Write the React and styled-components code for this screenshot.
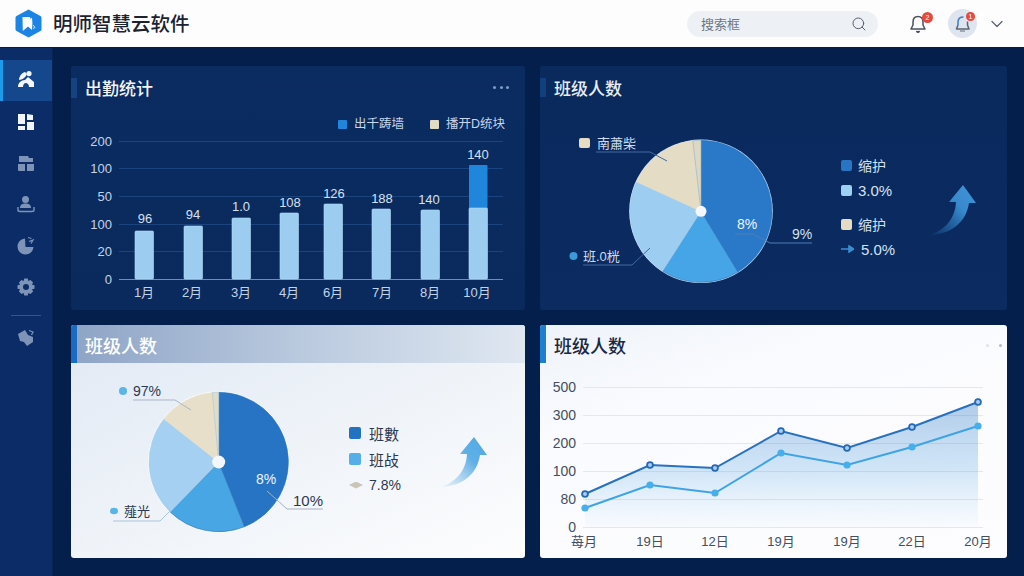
import React from 'react'
import styled, {createGlobalStyle} from 'styled-components'
import {Search, ChevronDown} from 'lucide-react'

const FONT = `'Liberation Sans', 'Noto Sans CJK SC', sans-serif`

const GlobalStyle = createGlobalStyle`
  html, body {
    margin: 0;
    padding: 0;
    background: #06204f;
    overflow: hidden;
  }
  * {
    box-sizing: border-box;
  }
  body {
    font-family: ${FONT};
  }
`

const Page = styled.div`
  width: 1024px;
  height: 576px;
  display: flex;
  flex-direction: column;
  background: #051f4d;
`

const Header = styled.header`
  height: 48px;
  flex: none;
  display: flex;
  align-items: center;
  padding: 0 17px 0 15px;
  background: #fdfdfe;
  border-bottom: 1px solid #0a1c3c;
`

const Brand = styled.div`
  display: flex;
  align-items: center;
  gap: 11px;
  flex: 1;
`

const BrandName = styled.div`
  font-size: 19.5px;
  font-weight: 500;
  color: #1b2230;
  line-height: 24px;
`

const SearchBox = styled.div`
  width: 191px;
  height: 26px;
  border-radius: 13px;
  background: #edf1f6;
  display: flex;
  align-items: center;
  justify-content: space-between;
  padding: 0 11px 0 14px;
  font-size: 13px;
  color: #6f7782;
  margin-right: 30px;
`

const IconWrap = styled.div`
  position: relative;
  display: flex;
  align-items: center;
  justify-content: center;
`

const Badge = styled.span`
  position: absolute;
  top: ${props => props.$top}px;
  right: ${props => props.$right}px;
  width: ${props => props.$size}px;
  height: ${props => props.$size}px;
  border-radius: 50%;
  background: #e8473b;
  color: #fff;
  font-size: 7px;
  line-height: ${props => props.$size}px;
  text-align: center;
`

const Avatar = styled(IconWrap)`
  width: 29px;
  height: 29px;
  border-radius: 50%;
  background: #dfe5ee;
  margin-left: 20px;
  margin-right: 10px;
`

const Body = styled.div`
  flex: 1;
  display: flex;
  min-height: 0;
`

const Sidebar = styled.nav`
  width: 53px;
  flex: none;
  background: #0b2c66;
  border-right: 1px solid #082354;
  padding-top: 12px;
  display: flex;
  flex-direction: column;
`

const NavItem = styled.div`
  height: ${props => props.$h || 41}px;
  display: flex;
  align-items: center;
  justify-content: center;
  opacity: ${props => props.$dim ? 0.62 : 1};
  background: ${props => props.$active ? '#14478c' : 'transparent'};
  border-left: 3px solid ${props => props.$active ? '#1d9bea' : 'transparent'};
  padding-right: 3px;
  padding-bottom: ${props => props.$active ? 4 : 0}px;
`

const NavLine = styled.div`
  height: 1px;
  margin: 7px 11px 1px;
  background: #33558c;
`

const Main = styled.main`
  flex: 1;
  display: grid;
  grid-template-columns: 454px 467px;
  grid-template-rows: 244px 233px;
  gap: 15px;
  padding: 18px 17px 18px 18px;
`

const Panel = styled.section`
  position: relative;
  border-radius: 3px;
  overflow: hidden;
  display: flex;
  flex-direction: column;
  background: ${props => props.$bg};
`

const PanelHead = styled.div`
  height: 38px;
  flex: none;
  display: flex;
  align-items: center;
  justify-content: space-between;
  padding: ${props => props.$pt}px 16px 0 14px;
  position: relative;
  background: ${props => props.$bg || 'transparent'};
`

const Accent = styled.span`
  position: absolute;
  left: 0;
  top: ${props => props.$top}px;
  bottom: ${props => props.$bottom}px;
  width: 6px;
  background: ${props => props.$color};
`

const Title = styled.h2`
  margin: 0;
  font-size: ${props => props.$size}px;
  font-weight: 500;
  color: ${props => props.$color};
`

const Dots = styled.div`
  display: flex;
  gap: 3.5px;
`

const Dot = styled.i`
  width: ${props => props.$size}px;
  height: ${props => props.$size}px;
  border-radius: 50%;
  background: ${props => props.$color};
`

const ChartSvg = styled.svg`
  display: block;
  flex: none;
`

const ChartLabel = styled.text`
  font-family: ${FONT};
  font-size: ${props => props.$size || 13}px;
  fill: ${props => props.$color};
  dominant-baseline: central;
`

const PieBody = styled.div`
  flex: 1;
  display: flex;
  min-height: 0;
  position: relative;
`

const Legend = styled.div`
  display: flex;
  flex-direction: column;
  flex: none;
  margin-top: ${props => props.$mt}px;
`

const LegendRow = styled.div`
  display: flex;
  align-items: center;
  gap: ${props => props.$gap || 6}px;
  height: 20px;
  margin-top: ${props => props.$mt || 0}px;
  font-size: ${props => props.$size || 14}px;
  color: ${props => props.$color};
`

const Swatch = styled.span`
  width: ${props => props.$w || 11}px;
  height: ${props => props.$w || 11}px;
  border-radius: 2px;
  flex: none;
  background: ${props => props.$color};
`

const Diamond = styled.span`
  width: 14px;
  height: 7px;
  flex: none;
  background: #c9c6b8;
  clip-path: polygon(0 50%, 50% 0, 100% 50%, 50% 100%);
`

const ArrowSlot = styled.div`
  flex: none;
  margin-left: ${props => props.$ml}px;
  margin-top: ${props => props.$mt}px;
`

const SideIcon = ({children}) => (
  <svg width="20" height="20" viewBox="0 0 20 20">{children}</svg>
)

const Logo = () => (
  <svg width="27" height="29" viewBox="0 0 27 29">
    <path d="M13.5 0.5 L25.5 7 Q26.5 7.6 26.5 8.8 V20.2 Q26.5 21.4 25.5 22 L13.5 28.5 L1.5 22 Q0.5 21.4 0.5 20.2 V8.8 Q0.5 7.6 1.5 7 Z" fill="#1c84e4" />
    <path d="M7.5 8 H15 L15.6 10 L17 8.6 L17.4 14 L17 21 L13 17.6 L7.8 22 Z" fill="#fff" />
    <path d="M18 16 l2 2.4 -2 1.2" fill="none" stroke="#cfe6fb" strokeWidth="1" />
  </svg>
)

const BellOutline = ({size, color}) => (
  <svg width={size} height={size} viewBox="0 0 20 20" fill="none" stroke={color} strokeWidth="1.5" strokeLinejoin="round">
    <path d="M10 2.5 C6.5 2.5 5 5 5 8 V11 L3 15 H17 L15 11 V8 C15 5 13.5 2.5 10 2.5 Z" />
    <path d="M8.4 17 Q10 19.4 11.6 17" fill={color} />
  </svg>
)

const ChatBell = () => (
  <svg width="20" height="20" viewBox="0 0 20 20" fill="none" strokeWidth="1.5" strokeLinejoin="round">
    <path d="M5 11 V8 C5 5 7 3 10.5 3" stroke="#3a7fc9" />
    <path d="M5 11 L3.5 15 H16 L14.5 11 V7.5" stroke="#5b6573" />
    <path d="M7 17 H12" stroke="#8c96a3" />
  </svg>
)

// pie slice from two clockwise angles, 0 at twelve o'clock
const slice = (cx, cy, r, from, to) => {
  const point = a => {
    const rad = (a * Math.PI) / 180
    return `${(cx + r * Math.sin(rad)).toFixed(2)} ${(cy - r * Math.cos(rad)).toFixed(2)}`
  }
  const large = to - from > 180 ? 1 : 0
  return `M${cx} ${cy} L${point(from)} A${r} ${r} 0 ${large} 1 ${point(to)} Z`
}

const Pie = ({cx, cy, r, slices, stroke, hole}) => (
  <g>
    <circle cx={cx} cy={cy} r={r + 0.8} fill={stroke} />
    {slices.map(s => (
      <path key={s.from} d={slice(cx, cy, r, s.from, s.to)} fill={s.color} stroke={s.line} strokeWidth="0.6" />
    ))}
    <circle cx={cx} cy={cy} r={hole} fill="#f4f7fb" />
  </g>
)

const TrendArrow = ({id, from, to}) => (
  <svg width="50" height="52" viewBox="0 0 50 52">
    <defs>
      <linearGradient id={id} x1="0" y1="1" x2="1" y2="0">
        <stop offset="0" stopColor={from} stopOpacity="0.1" />
        <stop offset="0.6" stopColor={to} stopOpacity="0.9" />
        <stop offset="1" stopColor={to} />
      </linearGradient>
    </defs>
    <path d="M2 51 C16 46 27 36 28 18 L21 18 L35 1 L48 19 L41 19 C38 38 24 50 2 51 Z" fill={`url(#${id})`} />
  </svg>
)

const BARS = [
  {x: 65, top: 131, label: '96', lx: 75, ly: 118, month: '1月', mx: 74},
  {x: 114, top: 126, label: '94', lx: 123, ly: 114, month: '2月', mx: 122},
  {x: 162, top: 118, label: '1.0', lx: 171, ly: 106, month: '3月', mx: 171},
  {x: 210, top: 113, label: '108', lx: 220, ly: 102, month: '4月', mx: 219},
  {x: 254, top: 104, label: '126', lx: 264, ly: 93, month: '6月', mx: 263},
  {x: 302, top: 109, label: '188', lx: 312, ly: 98, month: '7月', mx: 312},
  {x: 351, top: 110, label: '140', lx: 359, ly: 99, month: '8月', mx: 360},
  {x: 399, top: 108, label: '140', lx: 408, ly: 54, month: '10月', mx: 407, extra: 65},
]

const BAR_AXIS = [
  {label: '200', y: 41},
  {label: '100', y: 68},
  {label: '50', y: 96},
  {label: '100', y: 124},
  {label: '20', y: 151},
  {label: '0', y: 179},
]

const BarPanel = () => (
  <Panel $bg="linear-gradient(180deg, #0b2c61 0%, #0a2a5d 100%)">
    <PanelHead $pt={4}>
      <Accent $top={12} $bottom={6} $color="#16427f" />
      <Title $size={17} $color="#f2f5fa">出勤统计</Title>
      <Dots>
        <Dot $size={3} $color="#7d9bc6" />
        <Dot $size={3} $color="#7d9bc6" />
        <Dot $size={3} $color="#7d9bc6" />
      </Dots>
    </PanelHead>
    <ChartSvg width="454" height="206" viewBox="1 4 454 206">
      <rect x="268" y="20" width="9" height="9" rx="1" fill="#1f86dc" />
      <ChartLabel x="284" y="24" $size={12.5} $color="#c7d7ec">出千踌墙</ChartLabel>
      <rect x="360" y="20" width="9" height="9" rx="1" fill="#e3dcc4" />
      <ChartLabel x="376" y="24" $size={12.5} $color="#c7d7ec">播开D统块</ChartLabel>
      {BAR_AXIS.map(t => (
        <g key={t.y}>
          <line x1="49" x2="433" y1={t.y + 0.5} y2={t.y + 0.5} stroke={t.y === 179 ? '#6f8db8' : '#1b447f'} />
          <ChartLabel x="42" y={t.y} textAnchor="end" $color="#c3d3e8">{t.label}</ChartLabel>
        </g>
      ))}
      {BARS.map(b => (
        <g key={b.month}>
          {b.extra && <rect x={b.x} y={b.extra} width="18.5" height={b.top - b.extra + 1} rx="1" fill="#1f86dc" />}
          <rect x={b.x} y={b.top} width="18.5" height={179 - b.top} rx="1" fill="#9ccdf0" stroke="#b4dcf6" strokeWidth="0.6" />
          <ChartLabel x={b.lx} y={b.ly} textAnchor="middle" $color="#d4e0f0">{b.label}</ChartLabel>
          <ChartLabel x={b.mx} y={192} textAnchor="middle" $color="#c3d3e8">{b.month}</ChartLabel>
        </g>
      ))}
    </ChartSvg>
  </Panel>
)

const DARK_PIE = [
  {from: 0, to: 148.7, color: '#2a78c8', line: '#2a78c8'},
  {from: 148.7, to: 212.7, color: '#45a5e6', line: '#2e6fb4'},
  {from: 212.7, to: 294.6, color: '#9dcdf1', line: '#9dcdf1'},
  {from: 294.6, to: 353.4, color: '#e5dcc6', line: '#e5dcc6'},
  {from: 353.4, to: 360, color: '#dcd8c4', line: '#8fb4c6'},
]

const DarkPiePanel = () => (
  <Panel $bg="linear-gradient(180deg, #0a2a5e 0%, #0b2b61 100%)">
    <PanelHead $pt={4}>
      <Accent $top={12} $bottom={7} $color="#123f7e" />
      <Title $size={17} $color="#e8eef7">班级人数</Title>
    </PanelHead>
    <PieBody>
      <ChartSvg width="301" height="206" viewBox="0 38 301 206">
        <Pie cx={161} cy={145.3} r={71} slices={DARK_PIE} stroke="#cfe3f6" hole={5.5} />
        <rect x="39" y="72" width="11" height="10" rx="2" fill="#e6dcc4" />
        <ChartLabel x="57" y="77" $color="#cfdcec">南蕭柴</ChartLabel>
        <polyline points="56,86 110,86 127,95" fill="none" stroke="#3f6a9f" />
        <circle cx="33.5" cy="190" r="4" fill="#3d9ad8" />
        <ChartLabel x="43" y="190" $color="#cfdcec">班.0桄</ChartLabel>
        <polyline points="43,199 92,199 110,182" fill="none" stroke="#3f6a9f" />
        <ChartLabel x="207" y="158" textAnchor="middle" $size={14} $color="#eef4fb">8%</ChartLabel>
        <ChartLabel x="262" y="168" textAnchor="middle" $size={14} $color="#d5e1f0">9%</ChartLabel>
        <polyline points="195,168 213,168 230,177 272,177" fill="none" stroke="#4f7fb6" />
      </ChartSvg>
      <Legend $mt={51}>
        <LegendRow $color="#d5e1f0"><Swatch $color="#2a74c4" />缩护</LegendRow>
        <LegendRow $color="#d5e1f0" $size={15} $mt={5}><Swatch $color="#9dd0f3" />3.0%</LegendRow>
        <LegendRow $color="#d5e1f0" $mt={14}><Swatch $color="#e6dcc4" />缩护</LegendRow>
        <LegendRow $color="#d5e1f0" $size={15} $mt={5} $gap={7}>
          <svg width="13" height="8" viewBox="0 0 13 8">
            <path d="M0 4 H10 M8 1 L12.5 4 L8 7 Z" stroke="#3d8dd0" strokeWidth="1.6" fill="#3d8dd0" />
          </svg>
          5.0%
        </LegendRow>
      </Legend>
      <ArrowSlot $ml={33} $mt={80}>
        <TrendArrow id="darkArrow" from="#2a78c0" to="#3d94d8" />
      </ArrowSlot>
    </PieBody>
  </Panel>
)

const LIGHT_PIE = [
  {from: 0, to: 158.3, color: '#2874c4', line: '#2874c4'},
  {from: 158.3, to: 224.2, color: '#48a6e5', line: '#2a6db0'},
  {from: 224.2, to: 308.2, color: '#a5d0f1', line: '#a5d0f1'},
  {from: 308.2, to: 354.7, color: '#e8dfca', line: '#e8dfca'},
  {from: 354.7, to: 360, color: '#e0dcc8', line: '#a9c2cc'},
]

const LightPiePanel = () => (
  <Panel $bg="linear-gradient(155deg, #e1e9f4 0%, #f0f4f9 55%, #fdfdfe 100%)">
    <PanelHead $pt={2} $bg="linear-gradient(90deg, #8ea4c6 0%, #b9c9de 50%, #dfe7f1 100%)">
      <Accent $top={0} $bottom={0} $color="#1a6cc2" />
      <Title $size={18} $color="#ffffff">班级人数</Title>
    </PanelHead>
    <PieBody>
      <ChartSvg width="278" height="195" viewBox="0 38 278 195">
        <Pie cx={147.7} cy={137} r={69.7} slices={LIGHT_PIE} stroke="#ffffff" hole={6.5} />
        <circle cx="52" cy="66" r="4" fill="#57b5ea" />
        <ChartLabel x="62" y="66" $size={14} $color="#2c3850">97%</ChartLabel>
        <polyline points="62,75 104,75 120,85" fill="none" stroke="#a9b6c8" />
        <ellipse cx="43" cy="186" rx="4" ry="3.2" fill="#57b5ea" />
        <ChartLabel x="53" y="186" $color="#2c3850">薤光</ChartLabel>
        <polyline points="42,196 89,196 100,185" fill="none" stroke="#a9c4dc" />
        <ChartLabel x="195" y="154" textAnchor="middle" $size={14} $color="#eef5fc">8%</ChartLabel>
        <polyline points="196,166 216,184 252,184" fill="none" stroke="#a4b0c2" />
        <ChartLabel x="237" y="175" textAnchor="middle" $size={15} $color="#2c3850">10%</ChartLabel>
      </ChartSvg>
      <Legend $mt={60}>
        <LegendRow $color="#2c3850" $size={15} $gap={8}><Swatch $w={12} $color="#2372c2" />班數</LegendRow>
        <LegendRow $color="#2c3850" $size={15} $mt={6} $gap={8}><Swatch $w={12} $color="#55aee8" />班敁</LegendRow>
        <LegendRow $color="#2c3850" $mt={6} $gap={6}><Diamond />7.8%</LegendRow>
      </Legend>
      <ArrowSlot $ml={38} $mt={73}>
        <TrendArrow id="lightArrow" from="#8cc0e8" to="#4fa8e4" />
      </ArrowSlot>
    </PieBody>
  </Panel>
)

const LINE_X = [45, 110, 175, 241, 307, 372, 438]
const LINE_DARK = [169, 140, 143, 106, 123, 102, 77]
const LINE_LIGHT = [183, 160, 168, 128, 140, 122, 101]
const LINE_MONTHS = ['苺月', '19日', '12日', '19月', '19月', '22日', '20月']
const LINE_AXIS = [
  {label: '500', y: 62},
  {label: '300', y: 90},
  {label: '200', y: 118},
  {label: '100', y: 146},
  {label: '80', y: 174},
  {label: '0', y: 202},
]

const toPoints = values => values.map((y, i) => `${LINE_X[i]},${y}`).join(' ')

const LinePanel = () => (
  <Panel $bg="linear-gradient(160deg, #eef3fa 0%, #fafbfe 30%, #fdfdff 100%)">
    <PanelHead $pt={2}>
      <Accent $top={0} $bottom={0} $color="#1f7ed0" />
      <Title $size={18} $color="#1c2840">班级人数</Title>
      <Dots style={{gap: 10, marginRight: -11}}>
        <Dot $size={3} $color="#dfe3ea" />
        <Dot $size={3} $color="#b5bcc8" />
      </Dots>
    </PanelHead>
    <ChartSvg width="467" height="195" viewBox="0 38 467 195">
      <defs>
        <linearGradient id="lineFill" x1="0" y1="0" x2="0" y2="1">
          <stop offset="0" stopColor="#2a74c4" stopOpacity="0.36" />
          <stop offset="0.55" stopColor="#4b9ee0" stopOpacity="0.24" />
          <stop offset="1" stopColor="#7cc0f0" stopOpacity="0.03" />
        </linearGradient>
      </defs>
      {LINE_AXIS.map(t => (
        <g key={t.y}>
          <line x1="43" x2="443" y1={t.y + 0.5} y2={t.y + 0.5} stroke="#e3e7ee" />
          <ChartLabel x="36" y={t.y} textAnchor="end" $size={14} $color="#444e60">{t.label}</ChartLabel>
        </g>
      ))}
      <polygon points={`45,202 ${toPoints(LINE_DARK)} 438,202`} fill="url(#lineFill)" />
      <polyline points={toPoints(LINE_DARK)} fill="none" stroke="#2870c0" strokeWidth="2" />
      <polyline points={toPoints(LINE_LIGHT)} fill="none" stroke="#3ea4e6" strokeWidth="2" />
      {LINE_X.map((x, i) => (
        <g key={x}>
          <circle cx={x} cy={LINE_DARK[i]} r="2.9" fill="#a9cdf0" stroke="#2468b8" strokeWidth="1.8" />
          <circle cx={x} cy={LINE_LIGHT[i]} r="3.6" fill="#47aeec" />
          <ChartLabel x={x + (i === 0 ? -1 : 0)} y={216} textAnchor="middle" $color="#444e60">{LINE_MONTHS[i]}</ChartLabel>
        </g>
      ))}
    </ChartSvg>
  </Panel>
)

const App = () => (
  <Page>
    <GlobalStyle />
    <Header>
      <Brand>
        <Logo />
        <BrandName>明师智慧云软件</BrandName>
      </Brand>
      <SearchBox>
        <span>搜索框</span>
        <Search size={16} strokeWidth={1.5} color="#555e6b" />
      </SearchBox>
      <IconWrap>
        <BellOutline size={20} color="#4a525e" />
        <Badge $top={-2} $right={-5} $size={11}>2</Badge>
      </IconWrap>
      <Avatar>
        <ChatBell />
        <Badge $top={3} $right={2} $size={9}>1</Badge>
      </Avatar>
      <ChevronDown size={20} strokeWidth={1.5} color="#5a6370" />
    </Header>
    <Body>
      <Sidebar>
        <NavItem $active>
          <SideIcon>
            <path d="M9 3 C5 4 3 8 3 11 C6 11 10 8 11 5 Z M13 2 a2.6 2.6 0 1 1 0 5.2 a2.6 2.6 0 0 1 0 -5.2 Z M2 18 C2 14 5 11 9 11 L12 8 L18 13 V18 H13 C13 15 11 14 10 14 C8 14 7 16 7 18 Z" fill="#f4f7fc" />
          </SideIcon>
        </NavItem>
        <NavItem>
          <SideIcon>
            <path d="M2 2 H9 V12 H2 Z M11 2 L17 3 V8 H11 Z M11 10 H18 V18 H11 Z M2 14 H9 V18 H2 Z" fill="#f0f4fb" />
          </SideIcon>
        </NavItem>
        <NavItem $dim>
          <SideIcon>
            <path d="M3 3 H12 L13 5 H17 V9 H3 Z M2 11 H9 V18 H3 Q2 18 2 17 Z M11 11 H18 V17 Q18 18 17 18 H11 Z" fill="#c3d3ea" />
          </SideIcon>
        </NavItem>
        <NavItem $dim>
          <SideIcon>
            <circle cx="9.5" cy="5.5" r="3.5" fill="#c3d3ea" />
            <path d="M4 14 C4 10.5 6.5 9.5 9.5 9.5 C12.5 9.5 15 10.5 15 14 Z" fill="#c3d3ea" />
            <path d="M2 13 V16 Q2 17.5 4 17.5 H16 Q18 17.5 18 16 V13" fill="none" stroke="#c3d3ea" strokeWidth="1.4" />
          </SideIcon>
        </NavItem>
        <NavItem $dim>
          <SideIcon>
            <path d="M9 3.5 A8 8 0 1 0 17.5 12 H9.5 Z" fill="#c3d3ea" />
            <path d="M12 2.5 L15.5 3.5 M13 6.5 L17 5 L15 8.5" fill="none" stroke="#c3d3ea" strokeWidth="1.3" />
          </SideIcon>
        </NavItem>
        <NavItem $dim $h={43}>
          <SideIcon>
            <path fillRule="evenodd" d="M8.2 1.5 H11.8 L12.3 4 L14.5 2.9 L17.1 5.5 L16 7.7 L18.5 8.2 V11.8 L16 12.3 L17.1 14.5 L14.5 17.1 L12.3 16 L11.8 18.5 H8.2 L7.7 16 L5.5 17.1 L2.9 14.5 L4 12.3 L1.5 11.8 V8.2 L4 7.7 L2.9 5.5 L5.5 2.9 L7.7 4 Z M10 7 a3 3 0 1 0 0 6 a3 3 0 0 0 0 -6 Z" fill="#c3d3ea" />
          </SideIcon>
        </NavItem>
        <NavLine />
        <NavItem $dim>
          <SideIcon>
            <path d="M2 6 L9 2 L12 7 L17 9 V14 L11 18 L8 14 L4 13 Z" fill="#c3d3ea" />
            <path d="M13 2.5 L17 4 L15.5 7" fill="none" stroke="#c3d3ea" strokeWidth="1.3" />
          </SideIcon>
        </NavItem>
      </Sidebar>
      <Main>
        <BarPanel />
        <DarkPiePanel />
        <LightPiePanel />
        <LinePanel />
      </Main>
    </Body>
  </Page>
)

export default App
